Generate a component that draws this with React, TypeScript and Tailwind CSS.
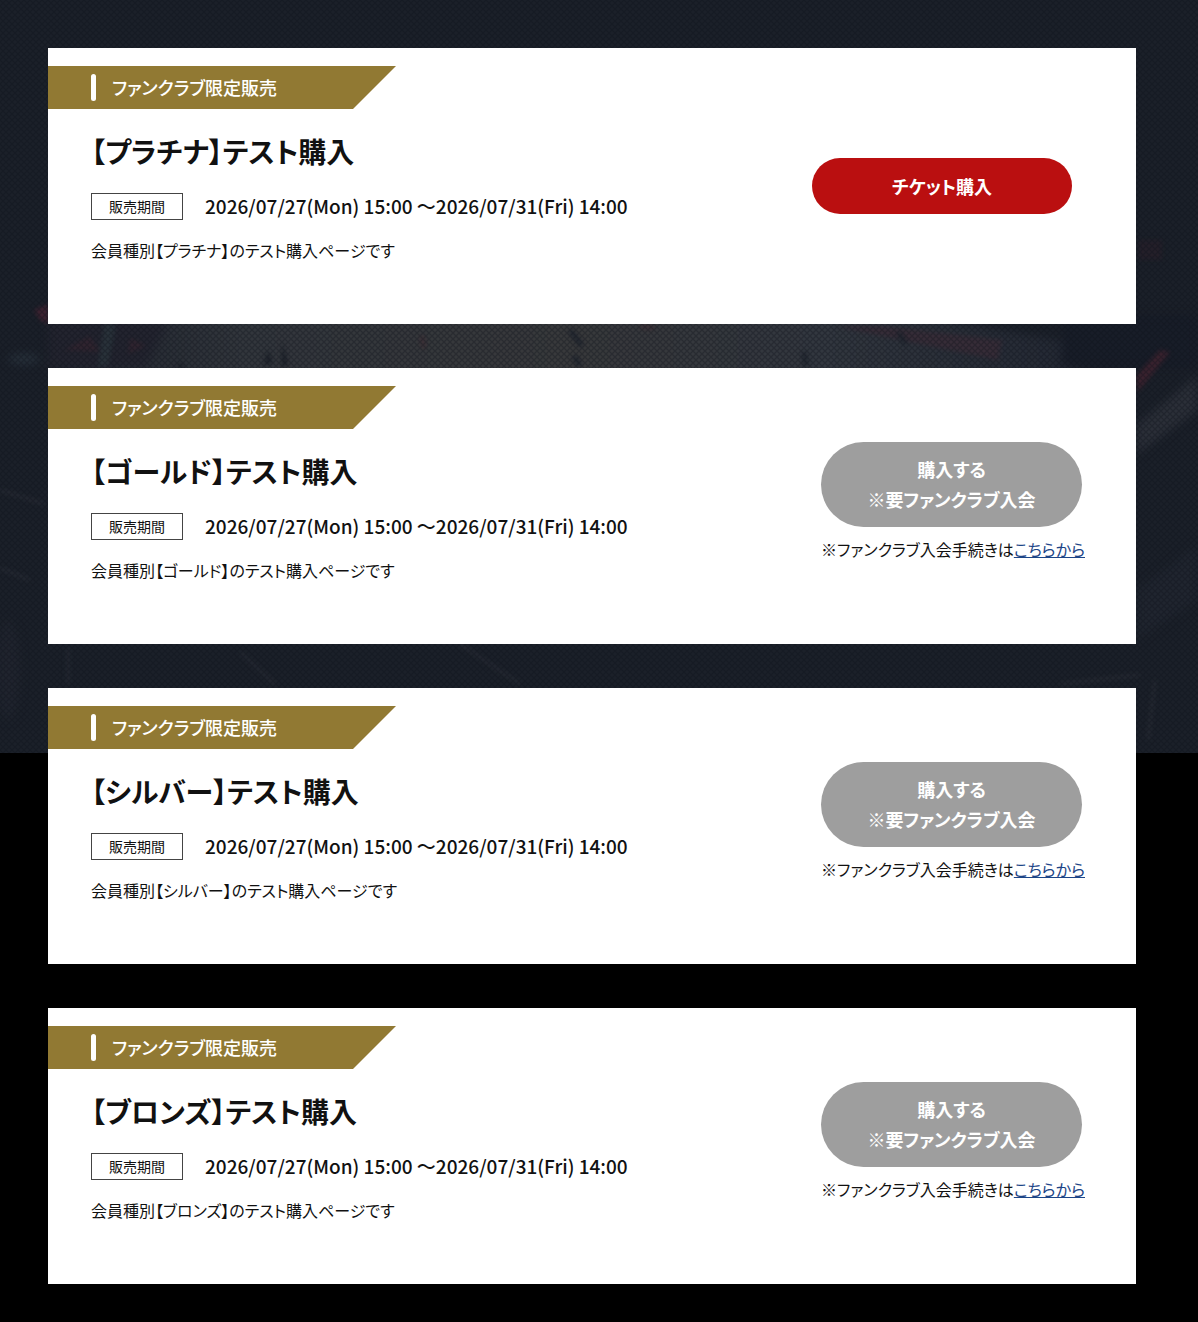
type Ticket = {
  rank: string,
  available: boolean,
}

const tickets: Ticket[] = [
  { rank: "プラチナ", available: true },
  { rank: "ゴールド", available: false },
  { rank: "シルバー", available: false },
  { rank: "ブロンズ", available: false },
];

// dark arena photo under a fine diamond mesh
const Backdrop: React.FC = (): React.ReactElement => {
  return (
    <svg
      className="col-start-1 row-start-1 h-[753px] w-full"
      viewBox="0 0 1198 753"
      preserveAspectRatio="none"
      aria-hidden="true"
    >
      <defs>
        <pattern id="mesh" width="6" height="6" patternUnits="userSpaceOnUse">
          <path d="M0 0L6 6M6 0L0 6" stroke="#0b0f18" strokeWidth="1.4" strokeOpacity="0.32" />
        </pattern>
        <linearGradient id="court" x1="0" x2="1">
          <stop offset="0" stopColor="#1f242e" />
          <stop offset="0.18" stopColor="#32363c" />
          <stop offset="0.5" stopColor="#38393b" />
          <stop offset="0.75" stopColor="#32373f" />
          <stop offset="1" stopColor="#232833" />
        </linearGradient>
        <filter id="soft" x="-20%" y="-20%" width="140%" height="140%" colorInterpolationFilters="sRGB">
          <feGaussianBlur stdDeviation="4" />
        </filter>
        <filter id="fine" x="-20%" y="-20%" width="140%" height="140%" colorInterpolationFilters="sRGB">
          <feGaussianBlur stdDeviation="2" />
        </filter>
      </defs>
      <rect width="1198" height="753" fill="#1b2029" />
      <g filter="url(#soft)">
        <path d="M150 305H860L1080 344V390H60V340Z" fill="url(#court)" />
        <path d="M48 320H170L145 368H48Z" fill="#23242f" />
        <path d="M1065 315H1198V368H1060Z" fill="#181d28" />
        <path d="M1136 425L1198 375V410L1136 455Z" fill="#2b2f38" />
        <path d="M1136 590L1198 545V600L1136 640Z" fill="#20252f" />
        <ellipse cx="24" cy="359" rx="16" ry="6" fill="#27303a" />
        <ellipse cx="8" cy="670" rx="12" ry="50" fill="#20242e" />
      </g>
      <g filter="url(#fine)">
        <path d="M34 310L48 304V324L40 320Z" fill="#3d2230" />
        <path d="M64 350L90 336L100 352ZM130 338L146 346L128 354Z" fill="#30242f" />
        <path d="M104 324L116 324L108 366L98 366Z" fill="#29323a" />
        <path d="M835 326L880 326L1002 340L998 360L920 344Z" fill="#362c37" />
        <path d="M1136 376L1160 350L1170 352L1138 392Z" fill="#3a222e" />
        <path d="M1138 240H1162V260H1138Z" fill="#241f29" />
        <path d="M282 342L288 364L282 368ZM180 362L186 368H178ZM268 350L272 362L264 366Z" fill="#1a1f27" />
        <path d="M570 330L582 346M574 356L580 366M804 352L806 366M898 332L906 344" stroke="#20252e" strokeWidth="5" />
        <path d="M422 336L424 348M640 326L654 328" stroke="#3c2f35" strokeWidth="5" />
        <path d="M0 490L44 504M0 568L30 580M240 652L275 684M460 644L520 684M68 648V684M1060 684L1140 675M1155 680L1148 740" stroke="#282c35" strokeWidth="3" fill="none" />
      </g>
      <rect width="1198" height="753" fill="url(#mesh)" />
    </svg>
  );
};

const BuyArea: React.FC<{ available: boolean }> = ({ available }): React.ReactElement => {
  if (available) {
    return (
      <button
        type="button"
        className="mr-16 h-14 w-[260px] shrink-0 rounded-full bg-[#ba0f10] text-[18px] leading-[30px] font-bold text-white"
      >
        チケット購入
      </button>
    );
  }

  return (
    <div className="mr-[51px] shrink-0 pb-2">
      <button
        type="button"
        disabled
        className="block h-[85px] w-[261px] rounded-full bg-[#9e9e9e] text-[18px] leading-[30px] font-bold text-white"
      >
        購入する
        <br />
        ※要ファンクラブ入会
      </button>
      <p className="mt-2 text-base leading-7 whitespace-nowrap">
        ※ファンクラブ入会手続きは
        <a href="#" className="text-[#1c4587] underline">こちらから</a>
      </p>
    </div>
  );
};

const TicketCard: React.FC<Ticket> = ({ rank, available }): React.ReactElement => {
  return (
    <article className="flex items-center justify-between bg-white text-[#111]">
      <div className="pt-[18px] pb-15">
        <div className="flex h-[43px] w-[348px] items-center gap-4 bg-[#917933] pl-[43px] text-white [clip-path:polygon(0_0,100%_0,calc(100%-43px)_100%,0_100%)]">
          <span className="h-[27px] w-[5px] rounded-sm bg-white" />
          <span className="text-[18px] leading-[25px] font-medium">ファンクラブ限定販売</span>
        </div>
        <div className="pl-[43px]">
          <h2 className="mt-[22px] text-[28px] leading-10 font-bold text-[#111]">【{rank}】テスト購入</h2>
          <div className="mt-[21px] flex items-center gap-[22px]">
            <span className="flex h-[27px] w-[92px] items-center justify-center border border-[#444] text-sm">販売期間</span>
            <span className="text-[19px] leading-7 font-medium">2026/07/27(Mon) 15:00 ～2026/07/31(Fri) 14:00</span>
          </div>
          <p className="mt-4 text-base leading-7">会員種別【{rank}】のテスト購入ページです</p>
        </div>
      </div>
      <BuyArea available={available} />
    </article>
  );
};

export default function App() {
  return (
    <div
      lang="ja"
      className="grid min-h-screen bg-black font-['Noto_Sans_CJK_JP',sans-serif] [font-feature-settings:'palt']"
    >
      <Backdrop />
      <main className="col-start-1 row-start-1 flex flex-col gap-11 pt-12 pr-[62px] pb-10 pl-12">
        {tickets.map((ticket) => (
          <TicketCard key={ticket.rank} {...ticket} />
        ))}
      </main>
    </div>
  );
}
